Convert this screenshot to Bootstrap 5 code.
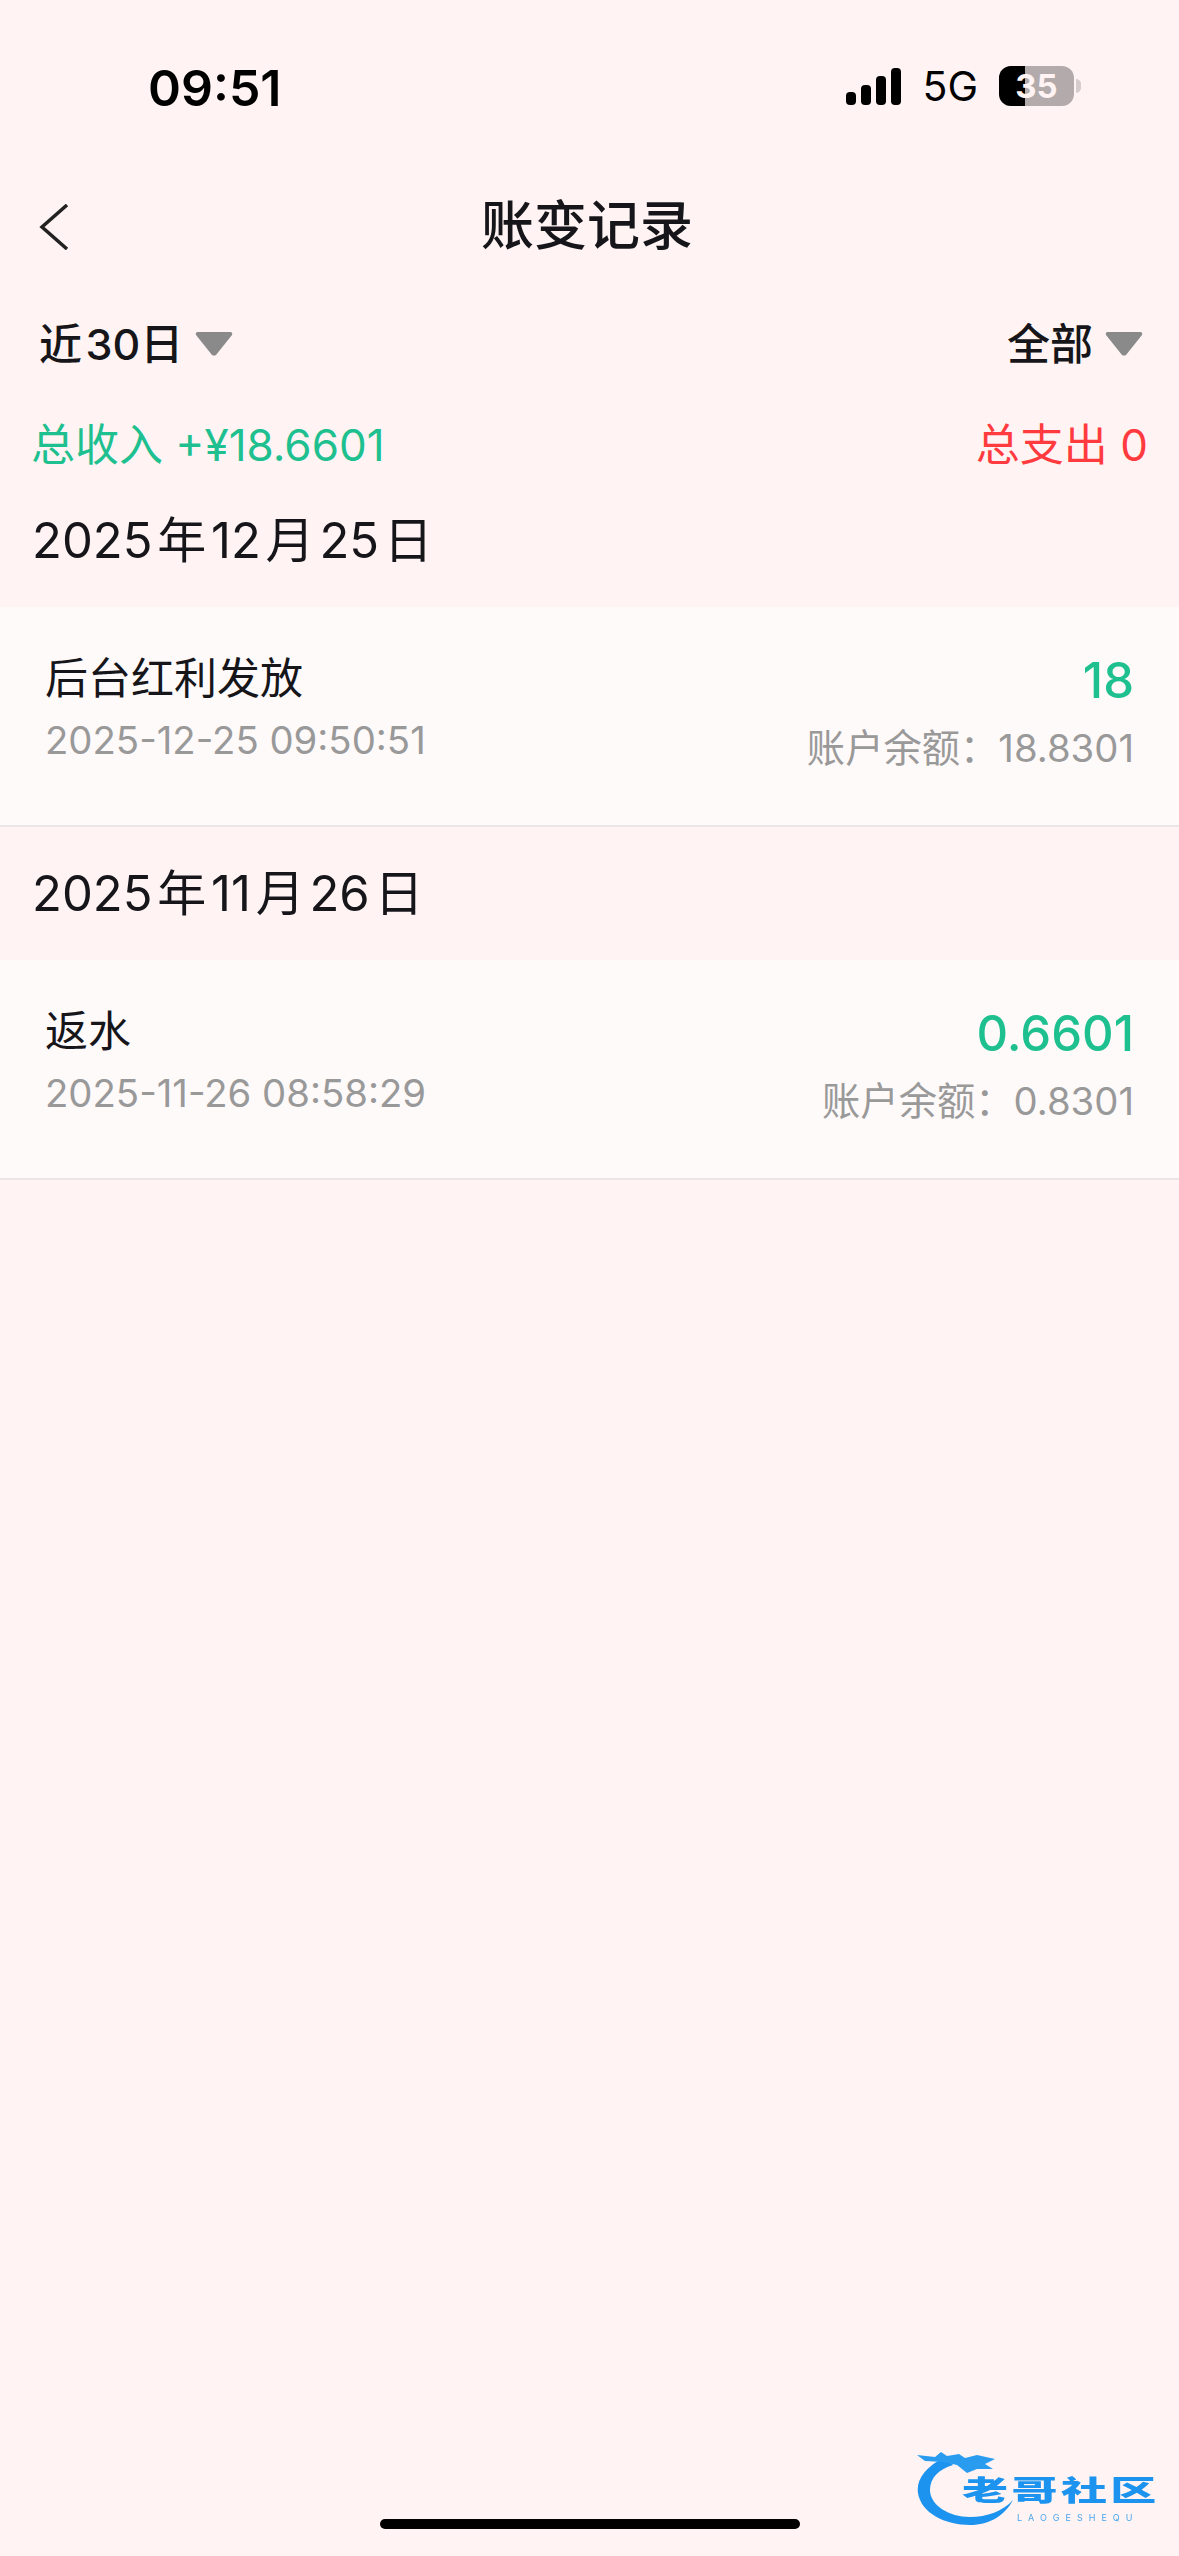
<!DOCTYPE html>
<html lang="zh-CN">
<head>
  <meta charset="UTF-8" />
  <meta name="viewport" content="width=device-width, initial-scale=1.0" />
  <title>账变记录</title>
  <link rel="stylesheet" href="https://cdn.jsdelivr.net/npm/bootstrap@5.3.3/dist/css/bootstrap.min.css" />
  <style>
    body { background:#fff4f3; color:#15151a; font-family:Inter,"Noto Sans CJK SC",sans-serif; }
    .screen { position:relative; height:2556px; overflow:hidden; }
    .status-bar { height:186px; padding:60px 98px 0 148px; }
    .status-time { font-size:50px; font-weight:600; line-height:56px; color:#000; }
    .signal { height:38px; gap:5px; }
    .signal i { display:block; width:10px; background:#000; border-radius:4px; }
    .signal i:nth-child(1) { height:13px; }
    .signal i:nth-child(2) { height:20px; }
    .signal i:nth-child(3) { height:29px; }
    .signal i:nth-child(4) { height:37px; }
    .net { font-size:41px; line-height:44px; color:#000; margin:0 21px; }
    .batt { position:relative; width:75px; height:40px; border-radius:12px; overflow:hidden; background:#b3abab; font-size:33px; line-height:40px; font-weight:700; color:#fff4f3; text-align:center; }
    .batt-fill { position:absolute; left:0; top:0; bottom:0; width:26px; background:#000; }
    .batt-num { position:relative; }
    .batt-nub { width:5px; height:14px; margin-left:2px; background:#d5cdcd; border-radius:0 5px 5px 0; }
    .title-bar { height:80px; padding:0 39px; position:relative; }
    .page-title { font-size:53px; line-height:80px; font-weight:500; margin:0; width:100%; text-align:center; padding-right:5px; }
    .back { position:absolute; left:39px; top:18px; }
    .filter-row { height:60px; margin-top:48px; padding:0 36px 0 39px; font-size:43px; line-height:60px; font-weight:500; word-spacing:-8px; }
    .tri { width:38px; height:24px; margin-left:12px; }
    .total-row { height:60px; margin-top:41px; padding:0 31px; font-size:44px; line-height:60px; }
    .c-in { color:#1fc08f; }
    .c-out { color:#ff3b3f; }
    .day { height:132px; padding:0 32px; font-size:49px; line-height:60px; display:flex; align-items:center; word-spacing:-9px; }
    .day-second { height:133px; }
    .rec { height:220px; background:#fffafa; border-bottom:2px solid #ebe5e5; padding:0 45px; }
    .rec-name { font-size:43px; line-height:60px; font-weight:400; margin-top:41px; }
    .rec-time { font-size:38.3px; line-height:46px; color:#999; margin-top:9px; }
    .rec-amt { font-size:49px; line-height:60px; font-weight:500; margin-top:44px; }
    .rec-bal { font-size:38.3px; line-height:46px; color:#999; margin-top:14px; }
    .home-bar { position:absolute; left:380px; top:2519px; width:420px; height:10px; background:#000; border-radius:5px; }
    .wm { position:absolute; left:915px; top:2445px; width:250px; height:90px; filter:blur(.5px); }
    .wm-cn { position:absolute; left:47px; top:28px; font-size:40px; line-height:36px; font-weight:900; letter-spacing:3px; color:#1c93ee; white-space:nowrap; transform:scale(1.15,.72); transform-origin:left center; }
    .wm-en { position:absolute; left:102px; top:67px; font-size:9px; line-height:11px; letter-spacing:6px; color:#4aa6ee; white-space:nowrap; }
  </style>
</head>
<body>
  <div class="screen">
    <div class="status-bar d-flex justify-content-between align-items-start">
      <div class="status-time">09:51</div>
      <div class="d-flex align-items-center mt-1">
        <div class="signal d-flex align-items-end"><i></i><i></i><i></i><i></i></div>
        <div class="net">5G</div>
        <div class="batt"><div class="batt-fill"></div><span class="batt-num">35</span></div>
        <div class="batt-nub"></div>
      </div>
    </div>

    <div class="title-bar">
      <svg class="back" width="30" height="46" viewBox="0 0 30 46"><path d="M28 1 3 23l25 22" fill="none" stroke="#222" stroke-width="3.5" /></svg>
      <h1 class="page-title">账变记录</h1>
    </div>

    <div class="filter-row d-flex justify-content-between align-items-center">
      <div class="d-flex align-items-center">近 30日<svg class="tri" viewBox="0 0 38 24"><path d="M3 0h32q3 0 2 3L21 23q-2 1-4 0L1 3q-1-3 2-3z" fill="#8a8a8a" /></svg></div>
      <div class="d-flex align-items-center">全部<svg class="tri" viewBox="0 0 38 24"><path d="M3 0h32q3 0 2 3L21 23q-2 1-4 0L1 3q-1-3 2-3z" fill="#8a8a8a" /></svg></div>
    </div>

    <div class="total-row d-flex justify-content-between">
      <div class="c-in">总收入 +¥18.6601</div>
      <div class="c-out">总支出 0</div>
    </div>

    <div class="day">2025 年 12 月 25 日</div>
    <div class="rec d-flex justify-content-between">
      <div>
        <div class="rec-name">后台红利发放</div>
        <div class="rec-time">2025-12-25 09:50:51</div>
      </div>
      <div class="text-end">
        <div class="rec-amt c-in">18</div>
        <div class="rec-bal">账户余额：18.8301</div>
      </div>
    </div>

    <div class="day day-second">2025 年 11 月 26 日</div>
    <div class="rec d-flex justify-content-between">
      <div>
        <div class="rec-name">返水</div>
        <div class="rec-time">2025-11-26 08:58:29</div>
      </div>
      <div class="text-end">
        <div class="rec-amt c-in">0.6601</div>
        <div class="rec-bal">账户余额：0.8301</div>
      </div>
    </div>

    <div class="wm">
      <svg width="120" height="90" viewBox="0 0 120 90">
        <path d="M30 12C10 22 1 35 3 48 6 68 30 80 55 80 75 80 90 70 98 55 88 66 72 72 55 72 34 72 15 60 15 45 15 33 24 24 38 20Z" fill="#1c93ee" />
        <path d="M2 10 20 12 26 7 32 11 44 9 50 13 62 10 80 14 70 19 78 24 62 24 52 28 42 20 28 17 10 16Z" fill="#2a9cf0" />
      </svg>
      <div class="wm-cn">老哥社区</div>
      <div class="wm-en">LAOGESHEQU</div>
    </div>

    <div class="home-bar"></div>
  </div>
</body>
</html>
